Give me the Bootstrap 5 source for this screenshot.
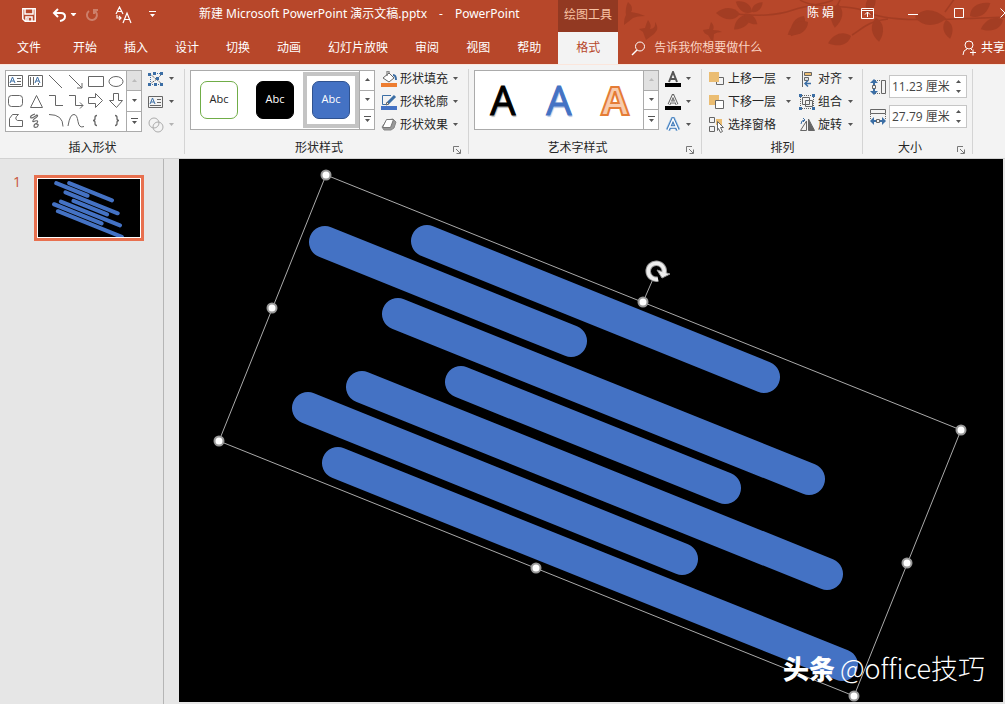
<!DOCTYPE html>
<html lang="zh-CN">
<head>
<meta charset="utf-8">
<meta name="viewport" content="width=device-width, initial-scale=1">
<title>新建 Microsoft PowerPoint 演示文稿.pptx - PowerPoint</title>
<link href="https://cdn.jsdelivr.net/npm/bootstrap@5.3.0/dist/css/bootstrap.min.css" rel="stylesheet">
<style>
:root{--brand:#b7472a;--line:#ababab}
body{font:12px/16px "Open Sans","Noto Sans CJK SC",sans-serif;color:#262626;background:#e6e6e6;overflow:hidden}
svg{display:block;flex:none;fill:none;stroke:#666;stroke-width:1}
button,.btn{font:inherit;color:inherit;border:0;padding:0;background:none;border-radius:0;line-height:16px}
.app-head{background:var(--brand);color:#fff}
.app-head svg{stroke:#fff}
.head-row{height:32px}
.app-head .branches{top:0;right:0;width:400px;height:64px;fill:#9f3b22;stroke:#9f3b22}
.quick{width:199px;padding-left:22px;padding-bottom:3px}
.doc-title{width:359px;padding-bottom:4px;gap:12px;font-family:"Noto Sans","Noto Sans CJK SC",sans-serif}
.context-head{width:60px;padding-bottom:2px;background:#923922;color:#f9c3a4}
.user-zone{padding-bottom:6px}
.user-zone .win-btn{width:46px;display:flex;justify-content:center}
.user-zone .win-close{margin-right:-23px}
.user-name{margin-right:10px}
.tab-list{gap:27px;padding-left:17px}
.tab-list a{color:#fff;text-decoration:none}
.tab-list a:first-child{margin-right:5px}
.tab-list .tab-active{width:60px;margin-left:-10px;background:#f3f3f3;color:var(--brand)}
.tell-box{padding-left:13px;gap:8px}
.tell-input{width:150px;background:none;border:0;color:#fbd5c5;padding:0;outline:0}
.tell-input::placeholder{color:#fbd5c5;opacity:1}
.ribbon{height:95px;background:#f3f3f3;border-top:1px solid #fbe6dc;border-bottom:1px solid #d2d2d2}
.tool-group{padding-top:2px;position:relative}
.tool-group::after{content:"";position:absolute;right:0;top:4px;bottom:4px;width:1px;background:#d4d4d4}
.g-shapes{width:185px}.g-styles{width:284px}.g-art{width:233px}.g-arrange{width:161px}.g-size{width:110px}
.tool-body{height:69px;padding-left:5px}
.g-arrange .tool-body,.g-size .tool-body{padding-left:7px;gap:7px}
.side-tools{margin-left:6px}
.group-name{height:23px;line-height:23px}
.launch{width:16px;padding-top:5px}
.gallery{margin-top:3px;height:60px;background:#fff;border:1px solid var(--line)}
.g-shapes .gallery{height:62px}
.shape-grid{display:grid;grid-template-columns:repeat(6,20px);grid-template-rows:repeat(3,20px)}
.scroller{width:15px;border-left:1px solid var(--line)}
.scroller button{display:flex;flex:1;align-items:center;justify-content:center}
.scroller button+button{border-top:1px solid var(--line)}
.scroller .off{background:#e1e1e1}
.scroller .off svg{fill:#bbb}
.arr{width:7px;height:4px;fill:#555;stroke:none}
.arr-more{height:7px}
.tool-row{height:23px;display:flex;align-items:center;gap:4px}
.menu-row{gap:2px}
.g-arrange .menu-row{gap:3px}
.menu-row .arr{margin-left:2px}
.style-cell{width:56px;height:58px;display:flex;align-items:center;justify-content:center}
.style-cell span{width:38px;height:38px;line-height:34px;border-radius:7px;border:1px solid;font-size:11px}
.picked{border:4px solid #c4c4c4;margin:1px 0;height:56px}
.art-cell{width:56px;font:40px/58px "Open Sans",sans-serif;text-align:center}
.art-a{color:#000;text-shadow:1px 2px 1px #bbb;-webkit-text-stroke:1px #000}
.art-b{color:#4472c4;text-shadow:1px 2px 1px #b9c9e6;-webkit-text-stroke:1px #4472c4}
.art-c{color:#f8cbad;-webkit-text-stroke:2px #e57c36;font-weight:700}
.size-label{margin-right:3px}
.measure{width:78px;height:23px;background:#fff;border:1px solid #c6c6c6}
.measure input{width:60px;border:0;padding:0 0 0 2px;outline:0;color:#444;background:none}
.spin button{display:flex;height:10px;align-items:center}
.workspace{flex:1;min-height:0}
.slide-list{width:164px;border-right:1px solid #b5b5b5;padding:16px 0 0 13px}
.slide-no{color:#c8553a;font-size:14px;line-height:14px;width:21px}
.thumb{width:110px;height:66px;border:3px solid #e8704f;background:#fff;padding:1px}
.thumb svg,.stage svg{width:100%;height:100%}
.thumb svg{background:#000}
.stage{margin:0 2px 2px 15px;background:#000;flex:1;min-width:0}
.watermark{right:18px;bottom:16px;color:#fff;font-size:27px;line-height:36px;gap:5px;white-space:nowrap;font-family:"Noto Sans CJK SC",sans-serif;font-weight:300;font-variant-ligatures:none}
.watermark strong{font-size:26px;font-weight:900}
</style>
</head>
<body class="vh-100 d-flex flex-column">
<svg width="0" height="0" class="position-absolute" aria-hidden="true">
<defs>
<g id="bars" stroke="#4472c4" stroke-width="32" stroke-linecap="round"><path d="M427 241 764 377M325 242 571 341M398 314 809 479M461 382 725 488M362 387 827 574M308 408 682 559M338 463 842 665"/></g>
<path id="down" d="M1 0h5L3.500 3z"/>
<path id="up" d="M1 3h5L3.500 0z"/>
<path id="more" d="M0 0h7v1H0zM1 3h5L3.500 6z"/>
<g id="corner" stroke="#777"><path d="M.5 6V.5H6M3 3l4 4M7.500 3.500v4h-4"/></g>
<path id="leaf" stroke="none" d="M0 0C5-8 15-8 24-1 16 7 6 7 0 0"/>
</defs>
</svg>

<header class="app-head position-relative overflow-hidden flex-shrink-0">
<svg class="branches position-absolute" viewBox="605 0 400 64" aria-hidden="true">
<g opacity=".8">
<path fill="none" stroke-width="1.500" d="M735 14c24 2 40 2 58-4s30-5 40-10M800 0c15 10 50 2 72 14 22 8 60 6 133 3M888 19c-20 2-26 10-36 16M840 0l-5 10M945 12l10-14"/>
<use href="#leaf" transform="translate(740 14) rotate(185)"/><use href="#leaf" transform="translate(752 12) rotate(215) scale(.8)"/><use href="#leaf" transform="translate(750 15) rotate(140) scale(.9)"/><use href="#leaf" transform="translate(744 14) rotate(40) scale(.7)"/><use href="#leaf" transform="translate(752 12) rotate(-40) scale(.6)"/>
<use href="#leaf" transform="translate(804 16) rotate(125)"/><use href="#leaf" transform="translate(808 22) rotate(150)"/><use href="#leaf" transform="translate(838 4) rotate(100)"/><use href="#leaf" transform="translate(851 36) rotate(165)"/><use href="#leaf" transform="translate(876 18) rotate(85)"/><use href="#leaf" transform="translate(868 12) rotate(-70) scale(.8)"/><use href="#leaf" transform="translate(915 17) rotate(5) scale(1.300)"/><use href="#leaf" transform="translate(946 20) rotate(80) scale(.8)"/><use href="#leaf" transform="translate(970 16) rotate(-30)"/><use href="#leaf" transform="translate(1003 20) rotate(160)"/>
<path stroke="none" d="M628 2q6 5 3 10 8 1 14 4-8 0-12 2-5 4-9 7 0-7 2-10-1-7 2-13M648 20q4 5 2 9 6 0 5-7 3 4 2 8l-3 4-8 6-3-8-4-3 6-1q1-4 3-8M711 22q4 4 2 8 6 0 9 2-5 0-8 2l-1 9-5-8q-4-1-5-5l6-1q1-4 2-7"/>
</g></svg>
<div class="head-row d-flex position-relative">
<div class="quick d-flex align-items-center">
<button type="button" aria-label="保存"><svg width="14" height="14"><path stroke-width="1.500" d="M.8.8h12.400v12.400H3.200L.8 11zM3 1v5h8V1M4 13V9h6v4M6 13v-3"/></svg></button>
<button type="button" aria-label="撤消" class="ms-3"><svg width="14" height="14"><path stroke-width="2" d="M1.500 5H9q4 0 4 3.500T8 13M6 1 2 5l4 4"/></svg></button>
<button type="button" aria-label="撤消选项" class="ms-1"><svg class="arr" style="fill:#fff"><use href="#down"/></svg></button>
<button type="button" aria-label="重复" class="ms-2" disabled><svg width="14" height="14" opacity=".3"><path stroke-width="2" d="M9 2.500a5 5 0 1 1-5 .5M9 6V2h4"/></svg></button>
<button type="button" aria-label="字体替换" class="ms-3"><svg width="18" height="18"><path stroke-width="1.200" d="M1 8 4.500 1 8 8M2 5.500h5M8 17l4-10 4 10M9.500 13.500h5M2 9v3h4M4 10l2 2-2 2"/></svg></button>
<button type="button" aria-label="自定义快速访问工具栏" class="ms-3"><svg width="7" height="7" style="fill:#fff;stroke:none"><use href="#more"/></svg></button>
</div>
<div class="doc-title d-flex align-items-center text-nowrap"><span>新建 Microsoft PowerPoint 演示文稿.pptx</span><span>-</span><span>PowerPoint</span></div>
<div class="context-head d-flex align-items-center justify-content-center text-nowrap">绘图工具</div>
<div class="user-zone d-flex align-items-center flex-fill justify-content-end text-nowrap">
<span class="user-name">陈 娟</span>
<button type="button" aria-label="功能区显示选项" class="win-btn"><svg width="13" height="11"><path d="M.5.5h12v10H.5zM.5 2.500h12M6.500 9V4M4 6.500 6.500 4 9 6.500"/></svg></button>
<button type="button" aria-label="最小化" class="win-btn"><svg width="11" height="11"><path d="M0 6.500h10"/></svg></button>
<button type="button" aria-label="最大化" class="win-btn"><svg width="11" height="11"><path d="M.5.500h9v9h-9z"/></svg></button>
<button type="button" aria-label="关闭" class="win-btn win-close"><svg width="11" height="11"><path d="m.5.5 9 9m0-9-9 9"/></svg></button>
</div></div>
<div class="head-row d-flex position-relative text-nowrap">
<nav class="tab-list d-flex align-items-center" aria-label="功能区">
<a href="#">文件</a><a href="#">开始</a><a href="#">插入</a><a href="#">设计</a><a href="#">切换</a><a href="#">动画</a><a href="#">幻灯片放映</a><a href="#">审阅</a><a href="#">视图</a><a href="#">帮助</a><a href="#" class="tab-active align-self-stretch d-flex align-items-center justify-content-center" aria-current="page">格式</a>
</nav>
<label class="tell-box d-flex align-items-center"><svg width="15" height="15" aria-hidden="true"><circle cx="9" cy="5.500" r="4.500"/><path stroke-width="1.500" d="M6 9 1 14"/></svg><input class="tell-input" type="text" placeholder="告诉我你想要做什么" aria-label="告诉我你想要做什么"></label>
<button type="button" class="ms-auto d-flex align-items-center"><svg width="15" height="16" class="me-1"><circle cx="7" cy="5" r="4"/><path d="M1 15q0-5 4-6M9 9l1 1M8 12.500h6M11 9.500v6"/></svg>共享</button>
</div>
</header>

<section class="ribbon d-flex flex-shrink-0">
<div class="tool-group g-shapes">
<div class="tool-body d-flex">
<div class="gallery d-flex">
<div class="shape-grid" role="group" aria-label="形状">
<button aria-label="文本框"><svg width="20" height="20"><path d="M2.500 4.500h14v11h-14zM11 7.500h4M11 10.500h4M4 13.500h11"/><path stroke="#3b6ea5" d="m4 12 2.500-6 2.500 6M5 10h3"/></svg></button>
<button aria-label="竖排文本框"><svg width="20" height="20"><path d="M2.500 4.500h14v11h-14zM4.500 6v8M7.500 6v8M12.500 12v2"/><path stroke="#3b6ea5" d="m9 12 2.500-6 2.500 6M10 10h3"/></svg></button>
<button aria-label="直线"><svg width="20" height="20"><path d="m3 4 13 13"/></svg></button>
<button aria-label="箭头"><svg width="20" height="20"><path d="m3 4 13 13M16 12v5h-5"/></svg></button>
<button aria-label="矩形"><svg width="20" height="20"><path d="M2.500 5.500h15v10h-15z"/></svg></button>
<button aria-label="椭圆"><svg width="20" height="20"><ellipse cx="10" cy="10.500" rx="7" ry="5"/></svg></button>
<button aria-label="圆角矩形"><svg width="20" height="20"><rect x="2.500" y="4.500" width="14" height="11" rx="3"/></svg></button>
<button aria-label="三角形"><svg width="20" height="20"><path d="m10.500 4.500 6 12h-12z"/></svg></button>
<button aria-label="肘形连接符"><svg width="20" height="20"><path d="M3 4.500h6.500v10H17"/></svg></button>
<button aria-label="肘形箭头"><svg width="20" height="20"><path d="M3 4.500h6.500v10H17m-3-3 3 3-3 3"/></svg></button>
<button aria-label="右箭头"><svg width="20" height="20"><path d="M2.500 6.500h7v-4l7 7-7 7v-4h-7z"/></svg></button>
<button aria-label="下箭头"><svg width="20" height="20"><path d="M7.500 2.500v7h-4l7 7 6-7h-4v-7z"/></svg></button>
<button aria-label="任意多边形"><svg width="20" height="20"><path d="M3.500 15.500v-8l3-4h6q-5 4-1 6h5v6z"/></svg></button>
<button aria-label="自由曲线"><svg width="20" height="20"><path stroke-width="1.200" d="M9 3Q3 5 5 7q2 0 6-3 2 1-3 4-3 4 1 2 4-1 2 2-3 1-3 3t3 1q3-3-1-3"/></svg></button>
<button aria-label="弧形"><svg width="20" height="20"><path d="M3 3.500q14 0 14 12"/></svg></button>
<button aria-label="曲线"><svg width="20" height="20"><path d="M2 15Q4 3 8 3.500q3 0 4 7t6 5"/></svg></button>
<button aria-label="左大括号"><svg width="20" height="20"><path stroke-width="1.300" d="M11 4.500q-2 0-2 2v1q0 2-2 2 2 0 2 2v1q0 2 2 2"/></svg></button>
<button aria-label="右大括号"><svg width="20" height="20"><path stroke-width="1.300" d="M9 4.500q2 0 2 2v1q0 2 2 2-2 0-2 2v1q0 2-2 2"/></svg></button>
</div>
<div class="scroller d-flex flex-column"><button class="off" aria-label="上一行" disabled><svg class="arr"><use href="#up"/></svg></button><button aria-label="下一行"><svg class="arr"><use href="#down"/></svg></button><button aria-label="其他"><svg class="arr arr-more"><use href="#more"/></svg></button></div>
</div>
<div class="side-tools">
<button class="tool-row" aria-label="编辑形状"><svg width="16" height="16"><path d="m2 3 12 10M2 13 9 8l6-6" stroke-dasharray="2 1"/><path stroke="#3b6ea5" d="M5 2.500h9M2.500 6v6M4 13.500h9" stroke-dasharray="1 1"/><path fill="#3b6ea5" stroke="none" d="M0 2h3v3H0zM5 1h3v3H5zM12 1h3v3h-3zM8 6h3v3H8zM0 12h3v3H0zM6 12h3v3H6zM12 12h3v3h-3z"/></svg><svg class="arr"><use href="#down"/></svg></button>
<button class="tool-row" aria-label="文本框选项"><svg width="16" height="16"><path d="M.5 2.500h14v11H.5zM9 5.500h4M9 8.500h4M2 11.500h11"/><path stroke="#3b6ea5" d="m2 10 2.500-6L7 10M3 8h3"/></svg><svg class="arr"><use href="#down"/></svg></button>
<button class="tool-row" aria-label="合并形状" disabled><svg width="16" height="16" opacity=".5"><circle cx="6" cy="6" r="5"/><circle cx="10" cy="10" r="5"/></svg><svg class="arr" opacity=".4"><use href="#down"/></svg></button>
</div></div>
<div class="group-name text-center">插入形状</div>
</div>

<div class="tool-group g-styles">
<div class="tool-body d-flex">
<div class="gallery d-flex">
<button class="style-cell"><span style="border-color:#70ad47">Abc</span></button>
<button class="style-cell"><span class="text-white" style="background:#000;border-color:#000">Abc</span></button>
<button class="style-cell picked" aria-pressed="true"><span class="text-white" style="background:#4472c4;border-color:#2f528f">Abc</span></button>
<div class="scroller d-flex flex-column"><button aria-label="上一行"><svg class="arr"><use href="#up"/></svg></button><button aria-label="下一行"><svg class="arr"><use href="#down"/></svg></button><button aria-label="其他"><svg class="arr arr-more"><use href="#more"/></svg></button></div>
</div>
<div class="side-tools">
<button class="tool-row menu-row"><svg width="17" height="16"><path fill="#fff" d="m2 7 6-5 5 5-5 4zM6 5V0h2v3"/><path stroke="#3b6ea5" stroke-width="2" d="M12 4q3 0 3 5"/><path fill="#ed7d31" stroke="none" d="M0 12h16v4H0z"/></svg><span>形状填充</span><svg class="arr"><use href="#down"/></svg></button>
<button class="tool-row menu-row"><svg width="17" height="16"><path stroke="#3b6ea5" d="M10 1.500H1.500v9H5"/><path stroke="#3b6ea5" stroke-width="3" d="m7 9 7-7"/><path d="m5 11 1-3 2 2z"/><path fill="#4472c4" stroke="none" d="M0 12h16v4H0z"/></svg><span>形状轮廓</span><svg class="arr"><use href="#down"/></svg></button>
<button class="tool-row menu-row"><svg width="17" height="16"><path fill="#999" stroke="#888" stroke-linejoin="round" d="m6 3 6-1 3 3-2 6-3 2H3l-2-3z"/><path fill="#fff" stroke="#777" stroke-linejoin="round" d="M5.500 2.500h7l-3 8h-8z"/></svg><span>形状效果</span><svg class="arr"><use href="#down"/></svg></button>
</div></div>
<div class="group-name d-flex"><span class="flex-fill text-center">形状样式</span><button class="launch" aria-label="设置形状格式"><svg width="8" height="8"><use href="#corner"/></svg></button></div>
</div>

<div class="tool-group g-art">
<div class="tool-body d-flex">
<div class="gallery d-flex">
<button class="art-cell art-a">A</button><button class="art-cell art-b">A</button><button class="art-cell art-c">A</button>
<div class="scroller d-flex flex-column"><button class="off" aria-label="上一行" disabled><svg class="arr"><use href="#up"/></svg></button><button aria-label="下一行"><svg class="arr"><use href="#down"/></svg></button><button aria-label="其他"><svg class="arr arr-more"><use href="#more"/></svg></button></div>
</div>
<div class="side-tools">
<button class="tool-row" aria-label="文本填充"><svg width="16" height="16"><path stroke="#555" stroke-width="2" d="m4 11 4-10 4 10M5.500 8h5"/><path fill="#000" stroke="none" d="M0 12h16v4H0z"/></svg><svg class="arr"><use href="#down"/></svg></button>
<button class="tool-row" aria-label="文本轮廓"><svg width="16" height="16"><path stroke="#666" stroke-width="3" d="m4 10.500 4-9 4 9M5.500 8h5"/><path stroke="#fff" d="m4 10.500 4-9 4 9M5.500 8h5"/><path fill="#000" stroke="none" d="M0 12h16v4H0z"/></svg><svg class="arr"><use href="#down"/></svg></button>
<button class="tool-row" aria-label="文本效果"><svg width="16" height="16"><path stroke="#a9cdec" stroke-width="5" d="m3 13 5-11 5 11"/><path stroke="#3f78b8" stroke-width="3.500" d="m3 13 5-11 5 11M5 10h6"/><path stroke="#fff" stroke-width="1.500" d="m3 13 5-11 5 11M5 10h6"/></svg><svg class="arr"><use href="#down"/></svg></button>
</div></div>
<div class="group-name d-flex"><span class="flex-fill text-center">艺术字样式</span><button class="launch" aria-label="设置文本效果格式"><svg width="8" height="8"><use href="#corner"/></svg></button></div>
</div>

<div class="tool-group g-arrange">
<div class="tool-body d-flex">
<div>
<button class="tool-row menu-row"><svg width="16" height="16"><path d="M10 6.500h4.500v7h-7V11"/><path fill="#ebbd72" stroke="none" d="M0 1h10v10H0z"/></svg><span class="me-1">上移一层</span><svg class="arr"><use href="#down"/></svg></button>
<button class="tool-row menu-row"><svg width="16" height="16"><path fill="#ebbd72" stroke="none" d="M0 1h10v10H0z"/><path fill="#fff" d="M6.500 6.500h8v8h-8z"/></svg><span class="me-1">下移一层</span><svg class="arr"><use href="#down"/></svg></button>
<button class="tool-row menu-row"><svg width="16" height="16"><path d="M.5.500h5v5h-5zM.5 9.500h5v5h-5z"/><path fill="#ebbd72" stroke="none" d="M7 2h6v6H7z"/><path fill="#fff" d="m8.500 4.500 6 6h-3l2 4-2 1-2-4-1 2z"/></svg><span>选择窗格</span></button>
</div>
<div>
<button class="tool-row menu-row"><svg width="16" height="16"><path d="M3.500 0v16"/><path fill="#ebbd72" d="M5.500 1.500h7v3h-7z"/><path fill="#ddd" d="M5.500 6.500h4v3h-4z"/><path stroke="#3b6ea5" stroke-width="1.500" d="M12 12.500H6m3-3-3 3 3 3"/></svg><span>对齐</span><svg class="arr"><use href="#down"/></svg></button>
<button class="tool-row menu-row"><svg width="16" height="16"><path d="M3.500 3.500h7v7h-7zM6.500 6.500h7v6h-7z"/><path stroke-dasharray="1 1" d="M1.500 3v10M3 14.500h10M14.500 3v10M3 1.500h10"/><path fill="#3b6ea5" stroke="none" d="M0 0h3v3H0zM13 0h3v3h-3zM0 13h3v3H0zM13 13h3v3h-3z"/></svg><span>组合</span><svg class="arr"><use href="#down"/></svg></button>
<button class="tool-row menu-row"><svg width="16" height="16"><path d="M7.500 4v9.500h-6z"/><path fill="#666" d="M9.500 2v11.500h6z"/><path stroke="#3b6ea5" d="M2 7q0-4 4-4M4 1l2 2-2 2"/></svg><span>旋转</span><svg class="arr"><use href="#down"/></svg></button>
</div></div>
<div class="group-name text-center">排列</div>
</div>

<div class="tool-group g-size">
<div class="tool-body d-flex flex-column pt-2">
<div class="d-flex align-items-center"><label for="shape-h" class="size-label"><svg width="16" height="16"><path d="M11.500 1.500h4v13h-4zM2.500 6.500h3v3h-3z"/><path stroke-dasharray="1 1" d="M5 1.500h6M5 14.500h6"/><path fill="#3b6ea5" stroke="none" d="m0 4 4-4 4 4H5v2H3V4zM0 12h3v-2h2v2h3l-4 4z"/></svg></label><div class="measure d-flex align-items-center"><input id="shape-h" type="text" value="11.23 厘米"><div class="spin ms-auto me-1"><button aria-label="增加高度"><svg class="arr"><use href="#up"/></svg></button><button aria-label="减少高度"><svg class="arr"><use href="#down"/></svg></button></div></div></div>
<div class="d-flex align-items-center"><label for="shape-w" class="size-label"><svg width="16" height="16"><path d="M.5.500h15v4H.5zM6.500 10.500h3v3h-3z"/><path stroke-dasharray="1 1" d="M.5 5v5M15.500 5v5"/><path fill="#3b6ea5" stroke="none" d="m0 12 4-4v3h2v2H4v3zM16 12l-4-4v3h-2v2h2v3z"/></svg></label><div class="measure d-flex align-items-center"><input id="shape-w" type="text" value="27.79 厘米"><div class="spin ms-auto me-1"><button aria-label="增加宽度"><svg class="arr"><use href="#up"/></svg></button><button aria-label="减少宽度"><svg class="arr"><use href="#down"/></svg></button></div></div></div>
</div>
<div class="group-name d-flex"><span class="flex-fill text-center">大小</span><button class="launch" aria-label="大小和位置"><svg width="8" height="8"><use href="#corner"/></svg></button></div>
</div>
</section>

<main class="workspace d-flex">
<aside class="slide-list flex-shrink-0 d-flex align-items-start">
<span class="slide-no">1</span>
<div class="thumb"><svg viewBox="180 209 806 457" preserveAspectRatio="xMidYMid slice"><use href="#bars"/></svg></div>
</aside>
<div class="stage position-relative overflow-hidden">
<svg viewBox="179 159 824 543" preserveAspectRatio="xMinYMin meet" role="img" aria-label="幻灯片">
<use href="#bars"/>
<path stroke="#aaa" d="M326 175 961 430 854 696 219 441zM643 302 653 279"/>
<g fill="#fff" stroke="#999" stroke-width="2"><circle cx="326" cy="175" r="4.500"/><circle cx="643" cy="302" r="4.500"/><circle cx="961" cy="430" r="4.500"/><circle cx="907" cy="563" r="4.500"/><circle cx="854" cy="696" r="4.500"/><circle cx="536" cy="568" r="4.500"/><circle cx="219" cy="441" r="4.500"/><circle cx="272" cy="308" r="4.500"/></g>
<path stroke="#999" stroke-width="5.500" d="M658 279a8 8 0 1 1 6-6"/><path fill="#eee" stroke="#999" d="m657 270 5 8 8-4z"/><path stroke="#eee" stroke-width="3.500" d="M658 279a8 8 0 1 1 6-6"/>
</svg>
<div class="watermark position-absolute d-flex"><strong>头条</strong><span>@office技巧</span></div>
</div>
</main>
<script src="https://cdn.jsdelivr.net/npm/bootstrap@5.3.0/dist/js/bootstrap.bundle.min.js"></script>
</body>
</html>
